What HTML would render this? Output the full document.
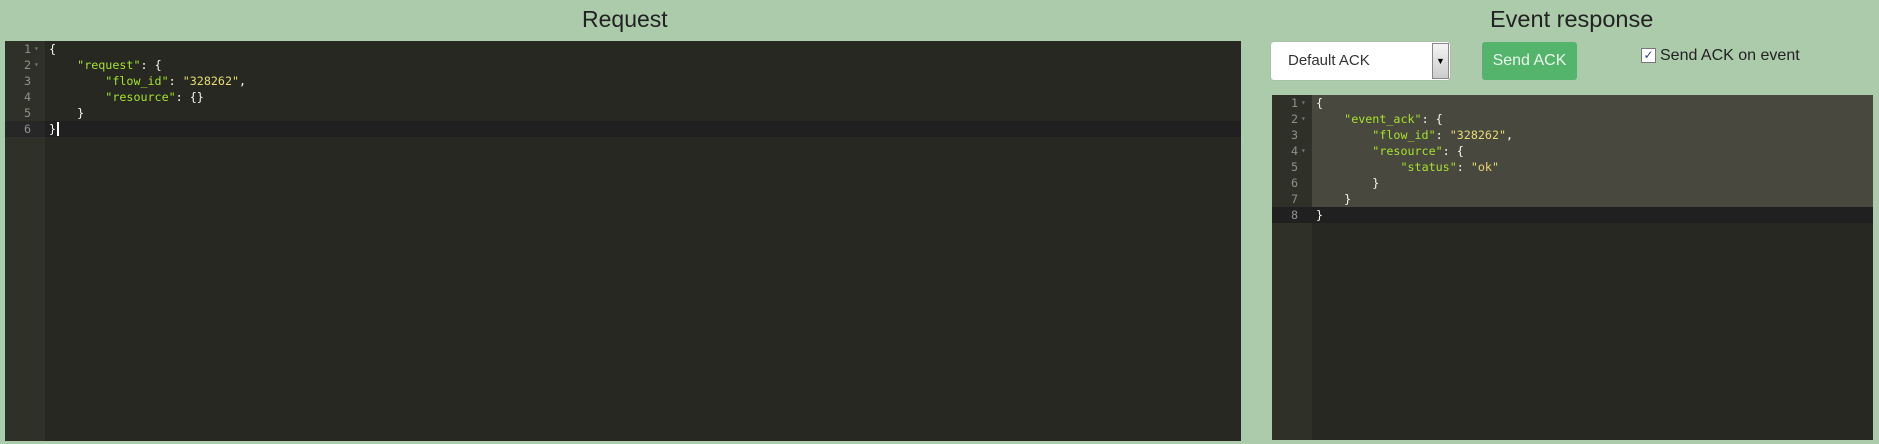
<!DOCTYPE html>
<html><head><style>
body{margin:0;width:1879px;height:444px;background:#abcbab;position:relative;overflow:hidden;font-family:"Liberation Sans",sans-serif}
.t{position:absolute;font-size:23px;color:#222;top:6px}
.ed{position:absolute;background:#272822;font-family:"DejaVu Sans Mono","Liberation Mono",monospace;font-size:11.7px;overflow:hidden}
.g{position:absolute;left:0;top:0;bottom:0;background:#2f3129;width:40px}
.ln{position:absolute;height:16px;line-height:16px;left:0;right:0}
.n{position:absolute;width:26px;text-align:right;color:#8f908a}
.ar{position:absolute;left:29px;top:0;color:#777;font-size:8px}
.c{position:absolute;white-space:pre;color:#f8f8f2}
.k{color:#a6e22e}.s{color:#e6db74}
</style></head><body>
<div class="t" style="left:582px">Request</div>
<div class="t" style="left:1490px;font-size:23.5px">Event response</div>

<div class="ed" style="left:5px;top:41px;width:1236px;height:400px">
<div class="g"></div>
<div class="ln" style="top:80px;background:#202020"></div>
<div class="ln" style="top:80px;width:40px;background:#272727"></div>
<div class="ln" style="top:0"><span class="n">1</span><span class="ar">▾</span><span class="c" style="left:44px">{</span></div>
<div class="ln" style="top:16px"><span class="n">2</span><span class="ar">▾</span><span class="c" style="left:44px">    <span class="k">"request"</span>: {</span></div>
<div class="ln" style="top:32px"><span class="n">3</span><span class="c" style="left:44px">        <span class="k">"flow_id"</span>: <span class="s">"328262"</span>,</span></div>
<div class="ln" style="top:48px"><span class="n">4</span><span class="c" style="left:44px">        <span class="k">"resource"</span>: {}</span></div>
<div class="ln" style="top:64px"><span class="n">5</span><span class="c" style="left:44px">    }</span></div>
<div class="ln" style="top:80px"><span class="n">6</span><span class="c" style="left:44px">}<span style="border-left:2px solid #fff;margin-left:1px"></span></span></div>
</div>

<div style="position:absolute;left:1271px;top:42px;width:179px;height:38px;background:#fff;border-radius:3px;box-shadow:0 0 1px #999"></div>
<div style="position:absolute;left:1288px;top:52px;font-size:15px;color:#333">Default ACK</div>
<div style="position:absolute;left:1432px;top:43px;width:17px;height:36px;background:linear-gradient(#f4f4f4,#ccc);border:1px solid #888;box-sizing:border-box;font-size:9px;text-align:center;line-height:34px">▼</div>
<div style="position:absolute;left:1482px;top:42px;width:95px;height:38px;background:#55b46c;border-radius:3px;color:#e8f6ea;font-size:16px;text-align:center;line-height:38px">Send ACK</div>
<div style="position:absolute;left:1641px;top:48px;width:13px;height:13px;background:#fff;border:1px solid #777;font-size:12px;line-height:13px;text-align:center;color:#2a3f8f">✓</div>
<div style="position:absolute;left:1660px;top:47px;font-size:16px;color:#222">Send ACK on event</div>

<div class="ed" style="left:1272px;top:95px;width:601px;height:345px">
<div class="g"></div>
<div style="position:absolute;left:40px;right:0;top:0;height:112px;background:#49483e"></div>
<div class="ln" style="top:112px;background:#202020"></div>
<div class="ln" style="top:0"><span class="n">1</span><span class="ar">▾</span><span class="c" style="left:44px">{</span></div>
<div class="ln" style="top:16px"><span class="n">2</span><span class="ar">▾</span><span class="c" style="left:44px">    <span class="k">"event_ack"</span>: {</span></div>
<div class="ln" style="top:32px"><span class="n">3</span><span class="c" style="left:44px">        <span class="k">"flow_id"</span>: <span class="s">"328262"</span>,</span></div>
<div class="ln" style="top:48px"><span class="n">4</span><span class="ar">▾</span><span class="c" style="left:44px">        <span class="k">"resource"</span>: {</span></div>
<div class="ln" style="top:64px"><span class="n">5</span><span class="c" style="left:44px">            <span class="k">"status"</span>: <span class="s">"ok"</span></span></div>
<div class="ln" style="top:80px"><span class="n">6</span><span class="c" style="left:44px">        }</span></div>
<div class="ln" style="top:96px"><span class="n">7</span><span class="c" style="left:44px">    }</span></div>
<div class="ln" style="top:112px"><span class="n">8</span><span class="c" style="left:44px">}</span></div>
</div>
</body></html>
